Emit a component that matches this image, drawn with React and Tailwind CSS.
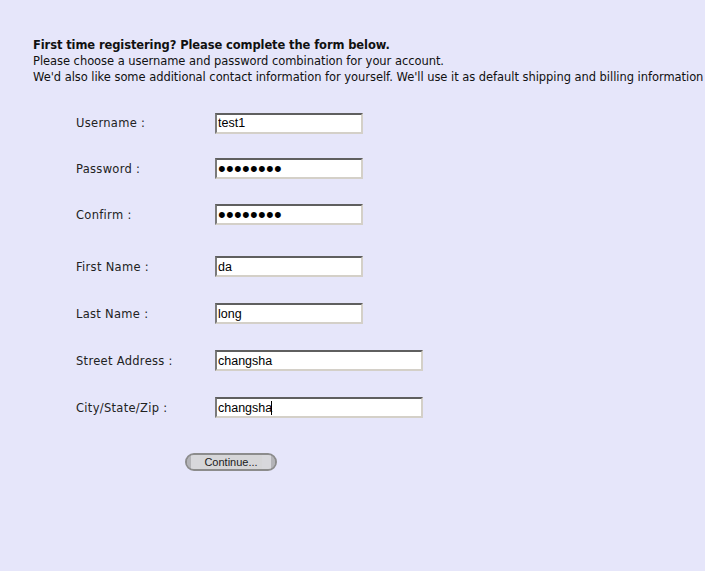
import React from 'react';

const fields = [
  { label: 'Username :', value: 'test1', type: 'text', w: 'w-[148px]', h: 'h-[46px]' },
  { label: 'Password :', value: 'abcdefgh', type: 'password', w: 'w-[148px]', h: 'h-[46px]' },
  { label: 'Confirm :', value: 'abcdefgh', type: 'password', w: 'w-[148px]', h: 'h-[46px]' },
  { label: 'First Name :', value: 'da', type: 'text', w: 'w-[148px]', h: 'h-[47px]', gap: true },
  { label: 'Last Name :', value: 'long', type: 'text', w: 'w-[148px]', h: 'h-[47px]' },
  { label: 'Street Address :', value: 'changsha', type: 'text', w: 'w-[208px]', h: 'h-[47px]' },
  { label: 'City/State/Zip :', value: 'changsha', type: 'text', w: 'w-[208px]', h: 'h-[47px]', caret: true },
];

function Field({ f }) {
  const inputCls =
    'h-[21px] border-2 border-t-[#5f5f5f] border-l-[#7a7a7a] border-r-[#d4d0c8] border-b-[#d4d0c8] bg-white pl-[1px] text-black outline-none ' +
    f.w +
    (f.type === 'password'
      ? " text-[22px] tracking-[0.3px] font-['Liberation_Sans',Arial,sans-serif]"
      : " text-[12.5px] tracking-normal font-['Liberation_Sans',Arial,sans-serif]");
  return (
    <div className={`flex items-center ${f.h} ${f.gap ? 'mt-[5px]' : ''}`}>
      <label className="w-[139px] text-[#222] tracking-[0.3px]">{f.label}</label>
      <div className="relative">
        <input type={f.type} defaultValue={f.value} readOnly className={inputCls} />
        {f.caret && <span className="absolute left-[56px] top-[4px] h-[14px] w-px bg-black" />}
      </div>
    </div>
  );
}

export default function App() {
  return (
    <div className="min-h-screen bg-[#e6e6fa] pl-[33px] pt-[37px] font-['DejaVu_Sans',Verdana,sans-serif] text-[11.5px] leading-[16px] tracking-[-0.05px] text-[#111]">
      <div className="whitespace-nowrap">
        <p className="font-bold tracking-[-0.1px]">First time registering? Please complete the form below.</p>
        <p>Please choose a username and password combination for your account.</p>
        <p>We'd also like some additional contact information for yourself. We'll use it as default shipping and billing information</p>
      </div>

      <form className="ml-[43px] mt-[15px]" onSubmit={(e) => e.preventDefault()}>
        {fields.map((f) => (
          <Field key={f.label} f={f} />
        ))}

        <div className="ml-[109px] mt-[22px]">
          <button
            type="submit"
            className="flex h-[18px] w-[92px] items-center overflow-hidden rounded-full border-2 border-[#8c8c8c] bg-[#c4c4c8] p-0"
          >
            <span className="h-full w-[4px] bg-[#b4b4b8]" />
            <span className="h-full w-[9px] bg-[#d8d8dc]" />
            <span className="flex h-full flex-1 items-center justify-center bg-[#d6d6d8] font-['Liberation_Sans',Arial,sans-serif] text-[11px] tracking-normal text-[#1a1a1a]">
              Continue...
            </span>
            <span className="h-full w-[9px] bg-[#d8d8dc]" />
            <span className="h-full w-[4px] bg-[#b4b4b8]" />
          </button>
        </div>
      </form>
    </div>
  );
}
